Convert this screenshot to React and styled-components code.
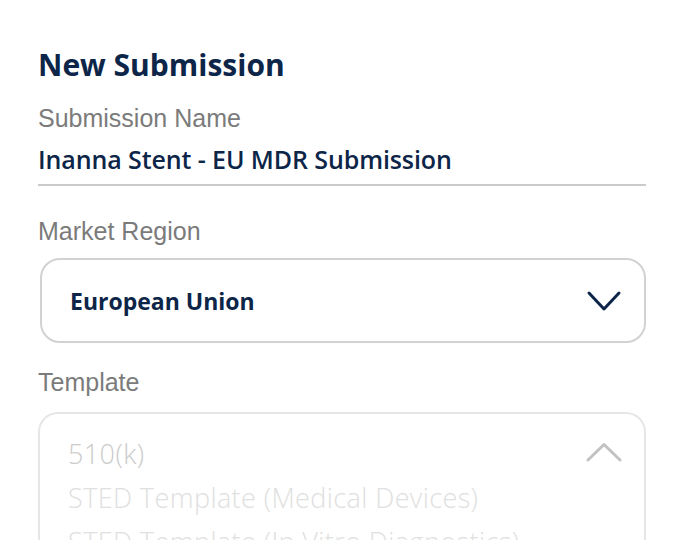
import React from 'react'
import styled, { createGlobalStyle } from 'styled-components'

const GlobalStyle = createGlobalStyle`
  html, body {
    margin: 0;
    padding: 0;
    background: #fff;
  }
  body {
    width: 680px;
    height: 540px;
    overflow: hidden;
  }
`

const Page = styled.div`
  display: flex;
  flex-direction: column;
  padding: 47px 34px 0 38px;
  width: 608px;
`

const Title = styled.h1`
  font-family: 'Open Sans', 'Noto Sans', sans-serif;
  font-size: 30px;
  font-weight: 700;
  line-height: 35px;
  color: #0c2548;
  margin: 0 0 22px;
`

const Label = styled.div`
  font-family: 'Liberation Sans', Arial, sans-serif;
  font-size: 25px;
  line-height: 28px;
  color: #7b7b7b;
  margin: 0;
`

const NameField = styled.div`
  font-family: 'Open Sans', 'Noto Sans', sans-serif;
  font-size: 25px;
  font-weight: 600;
  letter-spacing: -0.1px;
  line-height: 30px;
  color: #0c2548;
  padding: 12px 0 10px;
  border-bottom: 2px solid #cacaca;
  margin-bottom: 31px;
`

const Select = styled.div`
  display: flex;
  align-items: center;
  justify-content: space-between;
  box-sizing: border-box;
  height: 85px;
  margin: 13px 0 25px 2px;
  padding: 0 22px 0 28px;
  border: 2px solid #d2d2d2;
  border-radius: 20px;
  font-family: 'Open Sans', 'Noto Sans', sans-serif;
  font-size: 23px;
  font-weight: 700;
  color: #0c2548;
`

const Dropdown = styled.div`
  box-sizing: border-box;
  margin-top: 16px;
  border: 2px solid #e6e6e6;
  border-bottom: none;
  border-radius: 20px 20px 0 0;
  padding: 18px 22px 0 28px;
  height: 140px;
  overflow: hidden;
`

const Option = styled.div`
  display: flex;
  align-items: center;
  justify-content: space-between;
  height: 44px;
  font-family: 'Open Sans', 'Noto Sans', sans-serif;
  font-size: 27px;
  font-weight: 300;
  letter-spacing: 0.4px;
  line-height: 44px;
  white-space: nowrap;
  color: ${p => p.first ? '#cbcbcb' : '#e0e0e0'};
`

const Chevron = ({ up, color }) => (
  <svg width="36" height="22" viewBox="0 0 36 22" fill="none">
    <path
      d={up ? 'M2 17 L18 1.5 L34 17' : 'M3 3 L18 19 L33 3'}
      stroke={color}
      strokeWidth="3"
      strokeLinecap="round"
      strokeLinejoin="round"
    />
  </svg>
)

const App = () => (
  <>
    <GlobalStyle />
    <Page>
      <Title>New Submission</Title>
      <Label>Submission Name</Label>
      <NameField>Inanna Stent - EU MDR Submission</NameField>
      <Label>Market Region</Label>
      <Select>
        <span>European Union</span>
        <Chevron color="#0c2548" />
      </Select>
      <Label>Template</Label>
      <Dropdown>
        <Option first>
          <span>510(k)</span>
          <Chevron up color="#c2c2c2" />
        </Option>
        <Option>STED Template (Medical Devices)</Option>
        <Option>STED Template (In Vitro Diagnostics)</Option>
      </Dropdown>
    </Page>
  </>
)

export default App
